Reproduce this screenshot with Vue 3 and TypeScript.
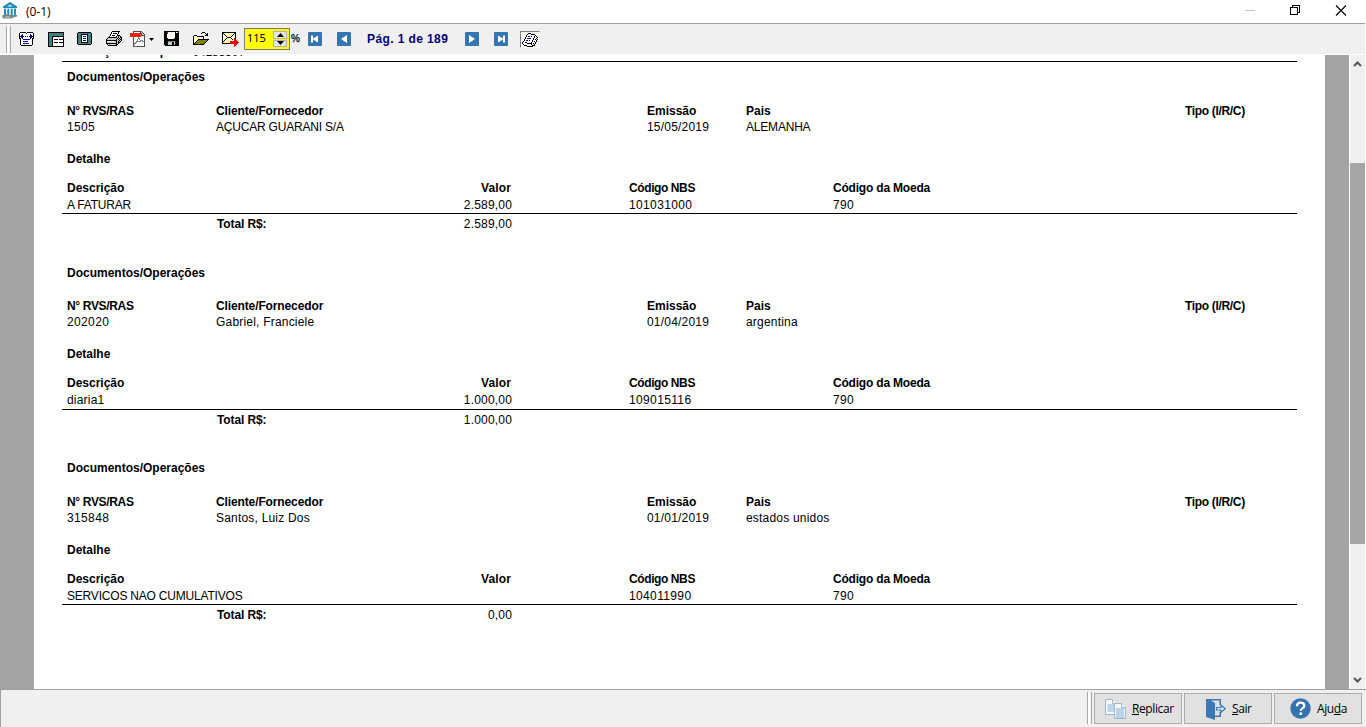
<script setup lang="ts">
interface Operation {
  id: string
  client: string
  date: string
  country: string
  description: string
  value: string
  nbs: string
  currency: string
  total: string
}

interface Pixel {
  x: number
  y: number
  fill: string
}

const operations: Operation[] = [
  { id: '1505', client: 'AÇUCAR GUARANI S/A', date: '15/05/2019', country: 'ALEMANHA', description: 'A FATURAR', value: '2.589,00', nbs: '101031000', currency: '790', total: '2.589,00' },
  { id: '202020', client: 'Gabriel, Franciele', date: '01/04/2019', country: 'argentina', description: 'diaria1', value: '1.000,00', nbs: '109015116', currency: '790', total: '1.000,00' },
  { id: '315848', client: 'Santos, Luiz Dos', date: '01/01/2019', country: 'estados unidos', description: 'SERVICOS NAO CUMULATIVOS', value: '', nbs: '104011990', currency: '790', total: '0,00' },
]

const palette: Record<string, string> = {
  K: '#000000', W: '#ffffff', N: '#000080', T: '#408080', G: '#808080', L: '#c8c8c8',
  R: '#e62510', Y: '#ffff80', O: '#808000', E: '#f00000', D: '#505050', S: '#e8e800',
}

function paint(rows: string[]): Pixel[] {
  return rows.flatMap((row, y) =>
    [...row].flatMap((key, x) => (palette[key] ? [{ x, y, fill: palette[key] }] : [])),
  )
}

// Words set in capitals run slightly tighter than mixed-case ones.
function tracking(text: string): string {
  return text === text.toUpperCase() ? 'caps' : 'mixed'
}

const icons: Record<string, Pixel[]> = {
  pageWidth: paint([
    '.KKKKKK.KKKKKK.',
    'KWWWWWWKWWWWWWK',
    'KWWNWWWWWWWNWWK',
    'KWNNWWWWWWWNNWK',
    'KNNNNWNWNWNNNNK',
    'KWNNWWWWWWWNNWK',
    'KKWNWWWWWWWNWKK',
    '.KWWNNNNNNNWWK.',
    '.KWWWWWWWWWWWK.',
    '.KWWNNNNNWWWWK.',
    '.KWWWWWWWWWWWK.',
    '.KWWNNNNNNWWWK.',
    '.KWWWWWWWWWWWK.',
    '..KKKKKKKKKKK..',
  ]),
  table: paint([
    'KKKKKKKKKKKKKKKK',
    'KTTTTTTTTTTTTTTK',
    'KTTTTTTTTTTTTTTK',
    'KTTTTTTTTTTTTTTK',
    'KTTTKKKKKKKKKKKK',
    'KTTTKWWWWWWWWWWK',
    'KTTTKWWWWWWWWWWK',
    'KTTTKWKKKKWKKKKK',
    'KTTTKWWWWWWWWWWK',
    'KTTTKWWWWWWWWWWK',
    'KTTTKWKKKKWKKKKK',
    'KTTTKWWWWWWWWWWK',
    'KTTTKWWWWWWWWWWK',
    'KTTTKWWWWWWWWWWK',
    'KKKKKKKKKKKKKKKK',
  ]),
  fullPage: paint([
    '.KKKKKKKKKKKKK.',
    'KTTTTTTTTTTTTTK',
    'KTTTKKKKKKKTTTK',
    'KTTTKWWWWWKTTTK',
    'KTTTKWNNNWKTTTK',
    'KTTTKWWWWWKTTTK',
    'KTTTKWNNNWKTTTK',
    'KTTTKWWWWWKTTTK',
    'KTTTKWNNNWKTTTK',
    'KTTTKWWWWWKTTTK',
    'KTTTKKKKKKKTTTK',
    'KTTTTTTTTTTTTTK',
    '.KKKKKKKKKKKKK.',
  ]),
  printer: paint([
    '......KKKKKKKK..',
    '.....KWWWWWWK...',
    '.....KWKKKKWK...',
    '....KWWWWWWK....',
    '....KWKKKWWKKK..',
    '...KWWWWWWKLKLK.',
    '..KKKKKKKKKLKLKK',
    '.KLLLLLLLLLKLKLK',
    'KLLLLLLLLLKLKLKK',
    'KKKKKKKKKKKLLKLK',
    'KLWWWWWWLLKLKLK.',
    'KLLLLSSLLLKLKK..',
    'KKKKKKKKKKKLK...',
    '.KLLLLLLLLKK....',
    '..KKKKKKKKK.....',
  ]),
  pdf: paint([
    '...DDDDDDDDD....',
    '...DWWWWWWDLD...',
    'RRRRRRRRRRRDLD..',
    'RRRRRRRRRRRDLLD.',
    'RRRRRRRRRRRDDDD.',
    'RRRRRRRRRRRWWWD.',
    '...DWWWWGWWWWWD.',
    '...DWWWWGGWWWWD.',
    '...DWWWGWGWWWWD.',
    '...DWWWGWWGGGWD.',
    '...DWWGGGGGWGGD.',
    '...DWGGWWWWWWWD.',
    '...DGGWWWWWWWWD.',
    '...DGWWWWWWWWWD.',
    '...DWWWWWWWWWWD.',
    '...DDDDDDDDDDDD.',
  ]),
  save: paint([
    'KKKKKKKKKKKKKKK',
    'KKKEWWWWWWWKWLK',
    'KKKEWWWWWWWKKKK',
    'KKKWWWWWWWWKKKK',
    'KKKWWWWWWWWKKKK',
    'KKKWWWWWWWWKKKK',
    'KKKWWWWWWWWKKKK',
    'KKKKWWWWWWKKKKK',
    'KKKKKKKKKKKKKKK',
    'KKKKKKKKKKKKKKK',
    'KKKKGGGGGGGKKKK',
    'KKKKLLLLKKLKKKK',
    'KKKKLLLLKKLKKKK',
    'KKKKLLLLKKLKKKK',
    '.KKKKKKKKKKKKKK',
  ]),
  open: paint([
    '.........KKK....',
    '........K...K.K.',
    '.............KK.',
    '.KKK........KKK.',
    'KYWYKKKKKKK.....',
    'KWYWYWYWYWK.....',
    'KYWYWYWYWYK.....',
    'KWYWYKKKKKKKKKKK',
    'KYWYKOOOOOOOOOK.',
    'KWYKOOOOOOOOOK..',
    'KYKOOOOOOOOOK...',
    'KKOOOOOOOOOK....',
    'KKKKKKKKKKK.....',
  ]),
  mail: paint([
    'KKKKKKKKKKKKKK...',
    'KKYWYWYWYWYWKK...',
    'KWKYWYWYWYWKWK...',
    'KYWKYWYWYWKWYK...',
    'KWYWKYWYWKWYWK...',
    'KYWYWKKKKWYWYK...',
    'KWYWKWYWYKWYEK...',
    'KYWKWYWYWYKWEE...',
    'KWKWYWYWYWYWEEE..',
    'KKWYWYWYEEEEEEEE.',
    'KWYWYWYWEEEEEEEEE',
    'KKKKKKKKEEEEEEEE.',
    '............EEE..',
    '............EE...',
    '............E....',
  ]),
  notes: paint([
    '......KKK.......',
    '.....KWWWKKKK...',
    '....KWWWWWWWWK..',
    '....KWNNWNWWKWK.',
    '...KWWWWWWWWKWWK',
    '...KWNNNNWWKWWK.',
    '..KWWWWWWWWKWKWK',
    '..KWNNWNWWKWWWK.',
    '.KWWWWWWWWKWKWK.',
    'KWWKKWWWWKWWWK..',
    'KWWWWKKKKKWKWK..',
    '.KWWWWWWWKWWK...',
    '..KKKWWWWWKKK...',
    '.....KKKKKK.....',
  ]),
}

const leading = ['pageWidth', 'table', 'fullPage', 'printer', 'pdf']
const files = ['save', 'open', 'mail']
</script>

<template>
  <div class="window">
    <header class="titlebar">
      <svg class="logo" width="16" height="17" viewBox="0 0 16 17">
        <path d="M8 0 15 4.5V6H1V4.5Z" fill="#1c87bd" />
        <path d="M5 4.5 8 2.6 11 4.5Z" fill="#d5eef8" />
        <path d="M2 6.5h2V13H2zM5.3 6.5h2V13h-2zM8.7 6.5h2V13h-2zM12 6.5h2V13h-2z" fill="#2690c3" />
        <path d="M1 13h14v1.500H1z" fill="#388eb2" />
        <path d="M0 13.500 5 12l4 1.500 5-1v2L9 16.500H1z" fill="#7c868a" />
        <path d="M3 15h5" stroke="#c7cccf" />
      </svg>
      <span class="caption">(0-1)</span>
      <div class="controls">
        <svg width="110" height="23" viewBox="0 0 110 23" fill="none" shape-rendering="crispEdges">
          <path d="M0 10.500H10" stroke="#c5c5c5" />
          <path d="M45.500 7.500h7v7h-7zM47.500 7V5.500h7v7H53" stroke="#000" />
          <path d="m91 5.500 10 10m0-10-10 10" stroke="#000" stroke-width="1.1" shape-rendering="auto" />
        </svg>
      </div>
    </header>

    <nav class="toolbar">
      <span class="grip"></span>
      <svg v-for="name in leading" :key="name" :class="['px', name]" width="16" height="16" viewBox="0 0 16 16" shape-rendering="crispEdges">
        <rect v-for="(p, i) in icons[name]" :key="i" :x="p.x" :y="p.y" width="1" height="1" :fill="p.fill" />
      </svg>
      <svg class="caret" width="5" height="3" viewBox="0 0 5 3"><path d="M0 0h5L2.500 3z" /></svg>
      <svg v-for="name in files" :key="name" :class="['px', name]" width="16" height="16" viewBox="0 0 16 16" shape-rendering="crispEdges">
        <rect v-for="(p, i) in icons[name]" :key="i" :x="p.x" :y="p.y" width="1" height="1" :fill="p.fill" />
      </svg>
      <div class="zoom-field">
        <span>115</span>
        <div class="spin">
          <i><svg width="7" height="4" viewBox="0 0 7 4"><path d="M0 4h7L3.500 0z" /></svg></i>
          <i><svg width="7" height="4" viewBox="0 0 7 4"><path d="M0 0h7L3.500 4z" /></svg></i>
        </div>
      </div>
      <span class="percent">%</span>
      <svg class="nav first" viewBox="0 0 14 14"><rect width="14" height="14" rx="1" /><path d="M3 3.500h2v3l5-3v7l-5-3v3H3z" /></svg>
      <svg class="nav prev" viewBox="0 0 14 14"><rect width="14" height="14" rx="1" /><path d="M10 3v8L4 7z" /></svg>
      <span class="page-label">Pág. 1 de 189</span>
      <svg class="nav next" viewBox="0 0 14 14"><rect width="14" height="14" rx="1" /><path d="M4 3v8l6-4z" /></svg>
      <svg class="nav last" viewBox="0 0 14 14"><rect width="14" height="14" rx="1" /><path d="M11 3.500H9v3l-5-3v7l5-3v3h2z" /></svg>
      <div class="pressed">
        <svg width="16" height="16" viewBox="0 0 16 16" shape-rendering="crispEdges">
          <rect v-for="(p, i) in icons.notes" :key="i" :x="p.x" :y="p.y" width="1" height="1" :fill="p.fill" />
        </svg>
      </div>
    </nav>

    <main class="viewer">
      <article class="sheet">
        <div class="cut-line"><b>Descrição</b><b class="type">do Tipo:</b><span>04188507</span></div>
        <section v-for="op in operations" :key="op.id" class="operation">
          <h2>Documentos/Operações</h2>
          <div class="row doc">
            <b class="rvs">N° RVS/RAS</b><b class="client-head">Cliente/Fornecedor</b><b>Emissão</b><b>Pais</b><b class="kind">Tipo (I/R/C)</b>
          </div>
          <div class="row doc">
            <span class="num">{{ op.id }}</span><span :class="tracking(op.client)">{{ op.client }}</span><span class="date">{{ op.date }}</span><span :class="tracking(op.country)">{{ op.country }}</span>
          </div>
          <h3>Detalhe</h3>
          <div class="row detail">
            <b>Descrição</b><b class="amount">Valor</b><b class="nbs">Código NBS</b><b class="currency">Código da Moeda</b>
          </div>
          <div class="row detail values">
            <span :class="tracking(op.description)">{{ op.description }}</span><span class="amount money">{{ op.value }}</span><span class="num">{{ op.nbs }}</span><span class="num">{{ op.currency }}</span>
          </div>
          <div class="total"><b>Total R$:</b><span class="money">{{ op.total }}</span></div>
        </section>
      </article>
      <aside class="scrollbar">
        <svg width="9" height="6" viewBox="0 0 9 6"><path d="M1 5 4.500 1.500 8 5" /></svg>
        <div class="track"><div class="thumb"></div></div>
        <svg width="9" height="6" viewBox="0 0 9 6"><path d="M1 1 4.500 4.500 8 1" /></svg>
      </aside>
    </main>

    <footer class="footer">
      <span class="grip"></span>
      <button class="replicate">
        <svg width="22" height="22" viewBox="0 0 22 22" stroke="#a7b4bf">
          <path d="M.5 1.500h7l4 4v11H.5z" fill="#f4f8fb" /><path d="M7.500 1.500v4h4" fill="#fff" />
          <path d="M2.500 7h7M2.500 9h7M2.500 11h7M2.500 13h7" stroke="#a9cbe6" stroke-width="1.300" />
          <path d="M9.500 5.500h7l4 4v11h-11z" fill="#f4f8fb" /><path d="M16.500 5.500v4h4" fill="#fff" />
          <path d="M11 11h8M11 13h8M11 15h8M11 17h8M11 19h8" stroke="#a3c6e4" stroke-width="1.300" />
        </svg>
        <span><u>R</u>eplicar</span>
      </button>
      <button class="exit">
        <svg width="20" height="22" viewBox="0 0 20 22">
          <path d="M0 1h15v6h-1.500V2.500H5L9 5v17L0 19z" fill="#3c78b4" />
          <path d="M9 17.500h4.500V14H15v5H9z" fill="#3c78b4" />
          <path d="M10.500 9.500H15V7l4.200 3.700-4.200 3.700V12h-4.500z" fill="#dce8f2" stroke="#3c78b4" stroke-width="1.200" />
        </svg>
        <span><u>S</u>air</span>
      </button>
      <button class="help">
        <svg width="21" height="21" viewBox="0 0 21 21">
          <circle cx="10.500" cy="10.500" r="10.200" fill="#3572b0" />
          <path d="M7 8.200C7 5.800 8.500 4.700 10.600 4.700s3.700 1.200 3.700 3.100c0 2.700-3.500 2.500-3.500 5" fill="none" stroke="#fff" stroke-width="2.300" />
          <rect x="9.500" y="14.500" width="2.500" height="2.500" fill="#fff" />
        </svg>
        <span>Aju<u>d</u>a</span>
      </button>
    </footer>
  </div>
</template>

<style>
body { overflow: hidden; background: #fff; }
</style>

<style scoped>
* { box-sizing: border-box; }
.window { width: 1366px; height: 727px; display: flex; flex-direction: column; font: 12px/16px "Liberation Sans", Arial, sans-serif; color: #000; }
svg { display: block; flex: none; }

.titlebar { height: 23px; display: flex; background: #fff; }
.logo { margin: 2px 0 0 2px; }
.caption { margin: 3px 0 0 8px; font: 12px/17px "Open Sans", "Noto Sans", sans-serif; }
.controls { margin: 0 11px 0 auto; }

.toolbar { height: 32px; width: 1365px; border-top: 1px solid #a0a0a0; border-bottom: 1px solid #fff; background: #f0f0f0; display: flex; align-items: flex-start; }
.grip { width: 5px; height: 27px; border: solid #a8a8a8; border-width: 0 1px; background: #fff; box-shadow: inset -1px 0 #f0f0f0; }
.toolbar .grip { margin: 2px 0 0 6px; }
.px { margin-top: 8px; overflow: visible; }
.pageWidth { margin-left: 8px; }
.table { margin-left: 13px; }
.fullPage { margin-left: 13px; }
.printer { margin-left: 13px; margin-top: 7px; }
.pdf { margin-left: 8px; margin-top: 7px; }
.caret { margin: 14px 0 0 3px; }
.save { margin-left: 10px; margin-top: 7px; }
.open { margin-left: 13px; }
.mail { margin-left: 13px; }
.zoom-field { width: 46px; height: 22px; margin: 4px 0 0 6px; border: 1px solid #7a7a7a; background: #ff0; display: flex; justify-content: space-between; padding: 2px; font: 11px/16px "Noto Sans", sans-serif; }
.zoom-field span { margin-top: -1px; }
.spin { width: 14px; display: flex; flex-direction: column; gap: 1px; }
.spin i { flex: 1; display: flex; align-items: center; justify-content: center; background: #e5e5e5; border: 1px solid #b0b0b0; }
.percent { width: 12px; margin: 7px 0 0 1px; font-size: 10px; letter-spacing: -1px; -webkit-text-stroke: .25px #000; }
.nav { width: 14px; height: 14px; margin-top: 8px; }
.nav rect { fill: #3575b2; }
.nav path { fill: #fff; }
.first { margin-left: 5px; }
.prev { margin-left: 15px; }
.page-label { width: 81px; margin: 7px 0 0 16px; color: #000080; font-weight: bold; letter-spacing: .4px; white-space: nowrap; }
.next { margin-left: 17px; }
.last { margin-left: 15px; }
.pressed { width: 20px; height: 17px; margin: 7px 0 0 12px; border: solid; border-width: 1px; border-color: #808080 #fff #fff #808080; background: #f7f7f7; padding: 1px 0 0 1px; overflow: hidden; }

.viewer { width: 1365px; height: 634px; display: flex; background: #a5a2a5; padding-left: 34px; overflow: hidden; }
.sheet { width: 1291px; background: #fff; padding: 0 28px; overflow: hidden; }
.cut-line { height: 7px; display: flex; align-items: flex-end; border-bottom: 1px solid #000; padding-left: 5px; line-height: 14px; margin-bottom: 7px; }
.cut-line > * { position: relative; top: -3px; }
.cut-line .type { margin-left: 7px; width: 61px; white-space: nowrap; }
.cut-line span { top: -2px; letter-spacing: -.1px; }

.operation { height: 195px; white-space: nowrap; }
.operation + .operation { margin-top: 1px; }
.operation + .operation h2 { margin-bottom: 17px; }
.operation:last-child { margin-top: 0; }
.operation:last-child h2 { margin-bottom: 18px; }
h2, h3 { margin: 0; padding-left: 5px; font-size: 12px; line-height: 16px; }
h2 { margin-bottom: 18px; }
h3 { margin: 16px 0 13px; }
.row { display: grid; padding-left: 5px; height: 16px; }
.doc { grid-template-columns: 149px 431px 99px 439px 70px; }
.detail { grid-template-columns: 389px 173px 204px 1fr; }
.values { height: 18px; padding-top: 1px; margin-bottom: 2px; border-bottom: 1px solid #000; }
.operation + .operation .values { height: 19px; }
.operation:last-child .values { height: 18px; }
.amount { width: 56px; text-align: right; }
b.amount { width: 55px; letter-spacing: .15px; }
.num { letter-spacing: .36px; }
.money { letter-spacing: .18px; }
.date { letter-spacing: .2px; }
.rvs { letter-spacing: -.33px; }
.client-head { letter-spacing: -.12px; }
.kind { letter-spacing: -.33px; }
.nbs { letter-spacing: -.4px; }
.currency { letter-spacing: -.2px; }
.caps { letter-spacing: -.2px; }
.mixed { letter-spacing: .2px; }
.total { display: grid; grid-template-columns: 100px 195px; padding-left: 155px; }
.total b { letter-spacing: -.12px; }
.total span { text-align: right; }

.scrollbar { width: 16px; margin-left: 24px; border-left: 1px solid #fff; background: #f0f0f0; display: flex; flex-direction: column; align-items: center; padding: 6px 0; }
.scrollbar svg path { fill: none; stroke: #555; stroke-width: 2; }
.track { flex: 1; width: 100%; padding-top: 96px; }
.thumb { height: 381px; background: #a6a6a6; }

.footer { height: 38px; background: #f0f0f0; border: solid #a0a0a0; border-width: 1px 0 0 1px; display: flex; justify-content: flex-end; padding: 3px 4px 0 0; }
.footer .grip { height: 32px; margin: -1px 2px 0 0; }
.footer button { width: 88px; height: 31px; border: 1px solid #adadad; background: #e1e1e1; display: flex; align-items: center; font: 12px/16px "Open Sans", "Noto Sans", sans-serif; color: #000; }
.footer button + button { margin-left: 2px; }
.footer .replicate { padding: 0 0 0 10px; gap: 5px; }
.footer .exit { padding: 0 0 0 21px; gap: 6px; }
.footer .help { padding: 0 0 0 15px; gap: 6px; }
.replicate span { letter-spacing: -.4px; }
.exit span, .help span { letter-spacing: -.4px; }
</style>
